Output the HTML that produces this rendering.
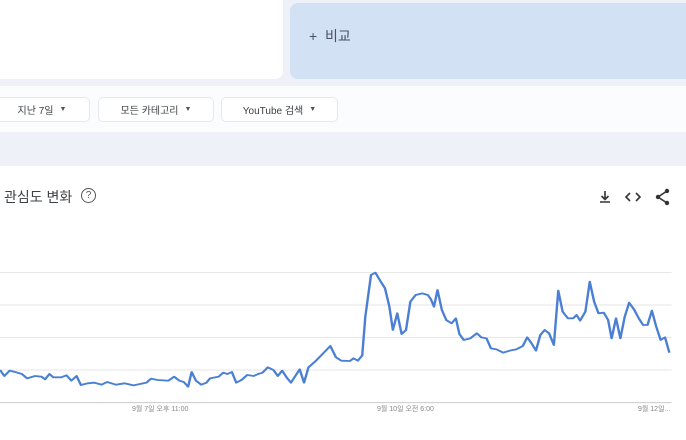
<!DOCTYPE html>
<html><head><meta charset="utf-8"><style>
body{margin:0;width:686px;height:440px;overflow:hidden;background:#fff;font-family:"Liberation Sans","Noto Sans CJK KR",sans-serif;position:relative}
.abs{position:absolute}
.chip{position:absolute;top:97px;height:25px;border:1px solid #e6e8ee;border-radius:5px;background:#fff;font-size:10px;color:#3c4043;display:flex;align-items:center;justify-content:center;box-sizing:border-box}
.chip span{font-size:7px;margin-left:6px;color:#555}
</style></head><body>
<div class="abs" style="left:0;top:0;width:686px;height:86px;background:#eef1f7"></div>
<div class="abs" style="left:0;top:0;width:283px;height:79px;background:#fff;border-radius:0 0 8px 0"></div>
<div class="abs" style="left:290px;top:3px;width:396px;height:76px;background:#d3e1f4;border-radius:8px 0 0 8px"></div>
<div class="abs" style="left:309px;top:26px;font-size:14px;color:#4a5160">+&nbsp;&nbsp;비교</div>
<div class="abs" style="left:0;top:86px;width:686px;height:46px;background:#fbfcfe"></div>
<div class="chip" style="left:-6px;width:96px">지난 7일<span>▼</span></div>
<div class="chip" style="left:98px;width:116px">모든 카테고리<span>▼</span></div>
<div class="chip" style="left:221px;width:117px">YouTube 검색<span>▼</span></div>
<div class="abs" style="left:0;top:132px;width:686px;height:34px;background:#eef1f8"></div>
<div class="abs" style="left:4px;top:187px;font-size:14px;color:#3c4043">관심도 변화</div>
<div class="abs" style="left:81px;top:188px;width:13px;height:13px;border:1.3px solid #555;border-radius:50%;font-size:10px;line-height:13px;text-align:center;color:#555">?</div>
<svg class="abs" style="left:597px;top:188px" width="80" height="18" viewBox="0 0 80 18">
<path d="M8 3v8M4.5 8l3.5 3.5 3.5-3.5M3 14h10" stroke="#333" stroke-width="1.6" fill="none"/>
<path d="M33 5l-4 4 4 4M39 5l4 4-4 4" stroke="#333" stroke-width="1.6" fill="none"/>
<path d="M70 3l-9 6 9 6" stroke="#333" stroke-width="1.6" fill="none"/>
<circle cx="70" cy="3" r="2.2" fill="#333"/><circle cx="61" cy="9" r="2.2" fill="#333"/><circle cx="70" cy="15" r="2.2" fill="#333"/>
</svg>
<svg class="abs" style="left:0;top:250px" width="686" height="190" viewBox="0 0 1568 570" preserveAspectRatio="none">
<g stroke="#e6e6e6" stroke-width="3"><line x1="0" y1="68" x2="1535" y2="68"/><line x1="0" y1="165" x2="1535" y2="165"/><line x1="0" y1="263" x2="1535" y2="263"/><line x1="0" y1="360" x2="1535" y2="360"/></g>
<line x1="0" y1="458" x2="1535" y2="458" stroke="#ccc" stroke-width="3"/>
<polyline fill="none" stroke="#4a7fd4" stroke-width="5.5" stroke-linejoin="round" points="0,360 10,378 22,362 40,368 50,372 62,385 80,378 95,380 103,388 113,372 122,382 140,382 152,376 163,392 175,378 185,405 200,400 215,398 232,404 245,396 265,404 285,400 305,406 320,402 335,398 345,386 360,390 385,392 398,380 410,392 420,396 430,410 438,366 448,392 460,404 472,398 480,385 500,380 510,368 520,372 530,366 540,398 552,390 565,375 580,378 590,372 600,368 612,352 625,360 635,378 645,362 655,382 665,398 678,372 685,358 695,398 705,352 720,335 735,315 755,288 768,322 780,332 800,333 808,325 818,332 828,316 835,200 848,75 858,68 868,90 880,115 890,170 898,240 908,190 918,252 928,240 938,155 950,135 965,130 978,135 985,148 992,170 1000,120 1010,180 1020,210 1032,220 1042,205 1050,252 1060,270 1075,265 1090,250 1100,262 1112,265 1122,295 1135,298 1150,308 1165,302 1180,298 1195,288 1205,262 1215,280 1225,302 1235,255 1245,240 1255,250 1266,285 1276,122 1286,185 1298,205 1310,205 1318,195 1326,212 1338,185 1348,95 1358,155 1368,190 1380,188 1390,210 1398,265 1408,205 1418,265 1428,200 1438,158 1450,180 1460,205 1470,225 1480,225 1490,182 1500,230 1510,270 1520,262 1530,308"/>
</svg>
<div class="abs" style="left:132px;top:404px;font-size:7px;color:#888">9월 7일 오후 11:00</div>
<div class="abs" style="left:377px;top:404px;font-size:7px;color:#888">9월 10일 오전 6:00</div>
<div class="abs" style="left:638px;top:404px;font-size:7px;color:#888">9월 12일...</div>
</body></html>
